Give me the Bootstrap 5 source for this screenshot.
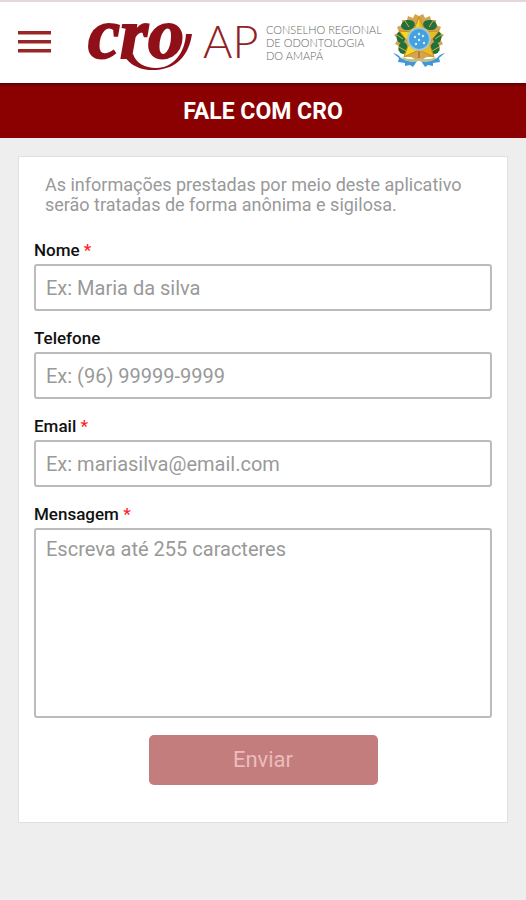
<!DOCTYPE html>
<html lang="pt-BR">
<head>
<meta charset="utf-8">
<meta name="viewport" content="width=device-width, initial-scale=1">
<title>Fale com CRO</title>
<link href="https://cdn.jsdelivr.net/npm/bootstrap@5.3.0/dist/css/bootstrap.min.css" rel="stylesheet">
<style>
body { background: #eee; font-family: Roboto, "Liberation Sans", sans-serif; }
.app-header { border-top: 2px solid #e6d5da; min-height: 83px; padding: 0 18px; gap: 36px; }
.menu-btn { line-height: 0; }
.brand-link { line-height: 0; }
.brand-link svg { overflow: visible; }
.page-title { background: linear-gradient(#5c0000, #8b0000 4px); font-size: 23px; line-height: 24px; padding: 17px 0 14px; }
.form-panel { margin: 18px; padding: 18px 15px 37px; border: 1px solid #e0e0e0; }
.intro { color: #999; font-size: 18px; line-height: 20px; margin: 0 11px 25px; }
.field { margin-bottom: 17px; }
.field-label { display: block; color: #111; font-size: 17px; font-weight: 500; line-height: 20px; margin-bottom: 4px; }
.req { color: #f22; }
.field-box { border: 2px solid #bbb; border-radius: 3px; font-size: 20px; line-height: 24px; height: 47px; padding: 9px 10px 8px; color: #333; }
.field-box::placeholder { color: #999; }
textarea.field-box { height: 190px; padding-top: 7px; resize: none; }
.send-btn { border-radius: 5px; font-size: 22px; line-height: 26px; height: 50px; }
.send-btn:disabled { background: #c47d7d; color: #ebbcbc; opacity: 1; }
</style>
</head>
<body>
<header class="app-header bg-white d-flex align-items-center">
  <button type="button" class="menu-btn btn p-0 border-0" aria-label="Menu">
    <svg width="33" height="24" viewBox="0 0 33 24" fill="#992525"><path d="M0 0h33v3.5H0zM0 9h33v3.5H0zM0 18h33v3.5H0z"/></svg>
  </button>
  <a href="#" class="brand-link">
    <svg width="360" height="62" viewBox="0 0 360 62" role="img" aria-label="CRO AP">
      <text x="1" y="46" font-family="Liberation Serif, serif" font-weight="700" font-style="italic" font-size="72" fill="#8f1018" stroke="#8f1018" stroke-width="2">cro</text>
      <path d="M36 40C39 51 52 59 68 58C90 57 102 43 105 22L99 22C98 40 87 56 69 56C58 56 49 51 46 42Z" fill="#8f1018"/>
      <text x="116" y="46" font-family="Lato, sans-serif" font-weight="300" font-size="45" fill="#8f1f24">AP</text>
      <g font-family="Lato, sans-serif" font-weight="300" font-size="11" fill="#666">
        <text x="179" y="22">CONSELHO REGIONAL</text>
        <text x="179" y="35">DE ODONTOLOGIA</text>
        <text x="179" y="48">DO AMAPÁ</text>
      </g>
      <g transform="translate(332 28)">
        <path d="M0-24L4-26 6-22 11-24 12-20 17-20 17-15 22-13 20-8 25-5 21-1 24 4 20 6 21 11 16 12 14 17 8 17 0 21-8 17-14 17-16 12-21 11-20 6-24 4-21-1-25-5-20-8-22-13-17-15-17-20-12-20-11-24-6-22-4-26Z" fill="#d3a550"/>
        <g fill="#21703a"><ellipse cx="-18" cy="-3" rx="4.500" ry="6"/><ellipse cx="-16" cy="8" rx="4.500" ry="6"/><ellipse cx="-11" cy="-15" rx="7" ry="5" transform="rotate(-12 -11 -15)"/><ellipse cx="18" cy="-3" rx="4.500" ry="6"/><ellipse cx="16" cy="8" rx="4.500" ry="6"/><ellipse cx="11" cy="-15" rx="7" ry="5" transform="rotate(12 11 -15)"/></g>
        <g fill="none" stroke="#c9b25a"><path d="M-22-5l6 4M-20 7l7 4M-14-19l4 6M22-5l-6 4M20 7l-7 4M14-19l-4 6"/></g>
        <path d="M0-23L6-8 20-9 10 3 15 17 0 10-15 17-10 3-20-9-6-8Z" fill="#f5d820" stroke="#ca8a26"/>
        <path d="M0-23V10L15 17 10 3 20-9H6Z" fill="#df9a28" opacity=".45"/>
        <circle cy="-1" r="11" fill="#45a0e0" stroke="#a9c7c1" stroke-width="2"/>
        <g fill="#d8efff"><circle cy="-6" r="1.200"/><circle cx="-4" cy="-3" r="1.200"/><circle cx="4" cy="-4" r="1.200"/><circle r="1.200"/><circle cx="-3" cy="4" r="1.200"/><circle cx="5" cy="3" r="1.200"/></g>
        <path d="M-1 11H1V21H-1Z" fill="#c8782d"/>
        <path d="M-26 13Q-21 14-18 18-10 23-2 21L-6 27-9 25-14 26-14 23-21 22-20 18Z" fill="#3d97d8"/>
        <path d="M26 13Q21 14 18 18 10 23 2 21L6 27 9 25 14 26 14 23 21 22 20 18Z" fill="#3d97d8"/>
        <path d="M-17 17Q-8 21 0 18Q8 21 17 17L15 20Q7 23 0 21Q-7 23-15 20Z" fill="#bdbf83"/>
      </g>
    </svg>
  </a>
</header>
<h1 class="page-title text-white text-center fw-bold mb-0">FALE COM CRO</h1>
<main>
  <form class="form-panel bg-white">
    <p class="intro">As informações prestadas por meio deste aplicativo serão tratadas de forma anônima e sigilosa.</p>
    <div class="field">
      <label class="field-label" for="nome">Nome <span class="req">*</span></label>
      <input class="field-box form-control" id="nome" type="text" placeholder="Ex: Maria da silva">
    </div>
    <div class="field">
      <label class="field-label" for="telefone">Telefone</label>
      <input class="field-box form-control" id="telefone" type="tel" placeholder="Ex: (96) 99999-9999">
    </div>
    <div class="field">
      <label class="field-label" for="email">Email <span class="req">*</span></label>
      <input class="field-box form-control" id="email" type="email" placeholder="Ex: mariasilva@email.com">
    </div>
    <div class="field">
      <label class="field-label" for="mensagem">Mensagem <span class="req">*</span></label>
      <textarea class="field-box form-control" id="mensagem" maxlength="255" placeholder="Escreva até 255 caracteres"></textarea>
    </div>
    <button type="submit" class="send-btn btn border-0 d-block w-50 mx-auto p-0" disabled>Enviar</button>
  </form>
</main>
<script src="https://cdn.jsdelivr.net/npm/bootstrap@5.3.0/dist/js/bootstrap.bundle.min.js"></script>
</body>
</html>
